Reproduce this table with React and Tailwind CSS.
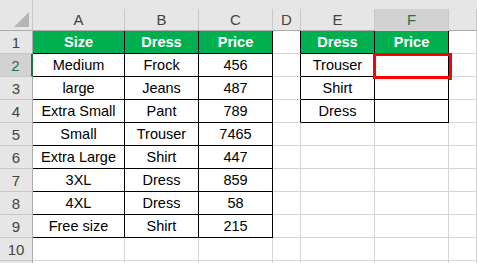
import React from "react";

const COLS = ["A", "B", "C", "D", "E", "F", ""];

const data = [
  ["Size", "Dress", "Price", "", "Dress", "Price", ""],
  ["Medium", "Frock", "456", "", "Trouser", "", ""],
  ["large", "Jeans", "487", "", "Shirt", "", ""],
  ["Extra Small", "Pant", "789", "", "Dress", "", ""],
  ["Small", "Trouser", "7465", "", "", "", ""],
  ["Extra Large", "Shirt", "447", "", "", "", ""],
  ["3XL", "Dress", "859", "", "", "", ""],
  ["4XL", "Dress", "58", "", "", "", ""],
  ["Free size", "Shirt", "215", "", "", "", ""],
  ["", "", "", "", "", "", ""],
  ["", "", "", "", "", "", ""],
];

function inTable(r, c) {
  if (c <= 2 && r <= 8) return true;
  if ((c === 4 || c === 5) && r <= 3) return true;
  return false;
}

function cellClass(r, c) {
  const t = inTable(r, c);
  const rightBlack = t || (c === 3 && r <= 3);
  const bottomBlack = t;
  const green = t && r === 0;
  let cls = "relative flex items-center justify-center pt-[2px] border-r border-b box-border ";
  cls += rightBlack ? "border-r-black " : "border-r-[#d4d4d4] ";
  cls += bottomBlack ? "border-b-black " : "border-b-[#d4d4d4] ";
  cls += green ? "bg-[#00b050] text-white font-bold " : "bg-white text-black ";
  return cls;
}

export default function App() {
  return (
    <div
      className="w-[477px] h-[263px] overflow-hidden bg-white text-[14.5px]"
      style={{ fontFamily: '"Liberation Sans", Arial, sans-serif' }}
    >
      <div className="grid grid-cols-[33px_92px_74px_74px_28px_74px_74px_1fr] grid-rows-[31px_repeat(10,23px)_23px]">
        <div className="relative bg-[#e6e6e6] border-r border-b border-r-[#c8c8c8] border-b-[#ababab] box-border">
          <svg className="absolute right-[3px] bottom-[3px]" width="15" height="15" viewBox="0 0 15 15">
            <polygon points="15,0 15,15 0,15" fill="#b5b5b5" />
          </svg>
        </div>
        {COLS.map((l, i) => {
          const active = l === "F";
          return (
            <div key={i} className="bg-[#e6e6e6] border-b border-b-[#ababab] box-border flex flex-col">
              <div
                className={
                  "mt-[9px] flex-1 flex items-center justify-center border-r box-border border-r-[#c8c8c8] text-[15px] " +
                  (active
                    ? "bg-[#d2d2d2] border-b-2 border-b-[#217346] text-[#217346]"
                    : "text-[#444]")
                }
              >
                {l}
              </div>
            </div>
          );
        })}
        {data.map((row, r) => {
          const activeRow = r === 1;
          return (
            <React.Fragment key={r}>
              <div
                className={
                  "flex items-center justify-center pt-[2px] border-b box-border border-b-[#c8c8c8] text-[15px] " +
                  (activeRow
                    ? "bg-[#d2d2d2] border-r-2 border-r-[#217346] text-[#217346]"
                    : "bg-[#e6e6e6] border-r border-r-[#ababab] text-[#444]")
                }
              >
                {r < 10 ? r + 1 : ""}
              </div>
              {row.map((v, c) => (
                <div key={c} className={cellClass(r, c)}>
                  {v}
                  {r === 1 && c === 5 && (
                    <>
                      <div className="absolute left-[-2px] top-[-1px] w-[79px] h-[26px] border-[3px] border-[#ff0000] box-border z-10" />
                      <div className="absolute left-[74px] top-[23px] w-[3px] h-[3px] bg-[#217346] z-20" />
                    </>
                  )}
                </div>
              ))}
            </React.Fragment>
          );
        })}
      </div>
    </div>
  );
}
